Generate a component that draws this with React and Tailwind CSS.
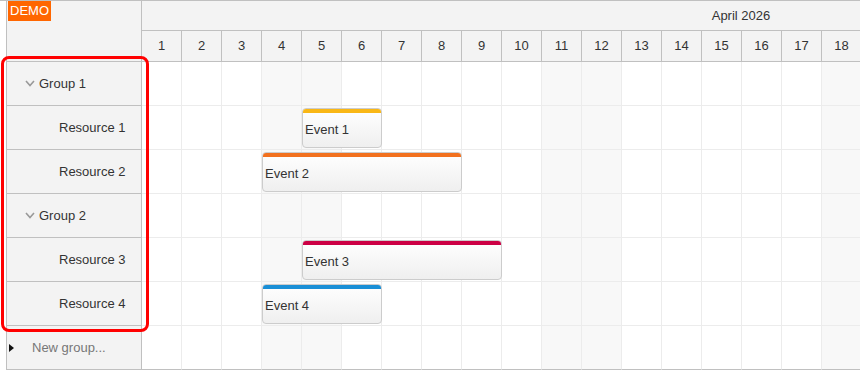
import React from 'react';

const days = Array.from({ length: 30 }, (_, i) => i + 1);
const weekend = [4, 5, 11, 12, 18, 19, 25, 26];

const rows = [
  { type: 'group', name: 'Group 1' },
  { type: 'resource', name: 'Resource 1', event: { text: 'Event 1', start: 5, len: 2, bar: 'bg-[#f9b716]' } },
  { type: 'resource', name: 'Resource 2', event: { text: 'Event 2', start: 4, len: 5, bar: 'bg-[#f2711f]' } },
  { type: 'group', name: 'Group 2' },
  { type: 'resource', name: 'Resource 3', event: { text: 'Event 3', start: 5, len: 5, bar: 'bg-[#cc0044]' } },
  { type: 'resource', name: 'Resource 4', event: { text: 'Event 4', start: 4, len: 3, bar: 'bg-[#1a8fd6]' } },
  { type: 'new', name: 'New group...' },
];

const Chevron = () => (
  <svg width="10" height="7" viewBox="0 0 10 7" className="mr-[4px]">
    <polyline points="1,1 5,5.5 9,1" fill="none" stroke="#999" strokeWidth="1.6" />
  </svg>
);

const RowHeader = ({ row }) => {
  if (row.type === 'group') {
    return (
      <div className="h-[44px] border-b border-[#c0c0c0] flex items-center pl-[18px] text-[#333]">
        <Chevron />
        <span>{row.name}</span>
      </div>
    );
  }
  if (row.type === 'new') {
    return (
      <div className="h-[44px] border-b border-[#c0c0c0] flex items-center pl-[2px] text-[#777]">
        <svg width="6" height="8" viewBox="0 0 6 8" className="mr-[17px]">
          <polygon points="0,0 5,4 0,8" fill="#111" />
        </svg>
        <span>{row.name}</span>
      </div>
    );
  }
  return (
    <div className="h-[44px] border-b border-[#c0c0c0] flex items-center pl-[52px] text-[#333]">
      {row.name}
    </div>
  );
};

const Event = ({ ev }) => (
  <div
    className="absolute top-[2px] h-[40px] rounded-[4px] border border-[#cccccc] bg-gradient-to-b from-white to-[#efefef] overflow-hidden flex flex-col"
    style={{ left: (ev.start - 1) * 40, width: ev.len * 40 }}
  >
    <div className={`h-[4px] shrink-0 ${ev.bar}`} />
    <div className="flex-1 flex items-center pl-[2px] text-[#333]">{ev.text}</div>
  </div>
);

export default function App() {
  return (
    <div className="w-[860px] h-[372px] bg-white relative overflow-hidden font-['Liberation_Sans',Arial,sans-serif] text-[13px]">
      <div className="flex border-t border-[#c0c0c0]">
        <div className="w-[6px] shrink-0" />

        {/* left panel */}
        <div className="w-[136px] shrink-0 border-l border-r border-[#c0c0c0] bg-[#f3f3f3]">
          <div className="h-[61px] border-b border-[#c0c0c0] relative">
            <div className="absolute left-[1px] top-0 bg-[#ff6600] text-white px-[2px] h-[20px] leading-[20px]">DEMO</div>
          </div>
          {rows.map((row, i) => (
            <RowHeader key={i} row={row} />
          ))}
        </div>

        {/* timeline */}
        <div className="flex-1 overflow-hidden">
          <div className="w-[1200px]">
            <div className="bg-[#f3f3f3] border-b border-[#c0c0c0]">
              <div className="h-[30px] border-b border-[#c0c0c0] flex items-center justify-center text-[#333] pr-[2px]">April 2026</div>
              <div className="h-[30px] flex">
                {days.map(d => (
                  <div key={d} className="w-[40px] shrink-0 border-r border-[#c0c0c0] flex items-center justify-center text-[#333]">{d}</div>
                ))}
              </div>
            </div>
            {rows.map((row, i) => (
              <div key={i} className="h-[44px] relative flex">
                {days.map(d => (
                  <div
                    key={d}
                    className={`w-[40px] shrink-0 border-r border-[#ececec] ${i === rows.length - 1 ? 'border-b border-b-[#c0c0c0]' : 'border-b border-b-[#ececec]'} ${weekend.includes(d) ? 'bg-[#f8f8f8]' : 'bg-white'}`}
                  />
                ))}
                {row.event && <Event ev={row.event} />}
              </div>
            ))}
          </div>
        </div>
      </div>

      {/* highlight */}
      <div className="absolute left-[1px] top-[56px] w-[148px] h-[276px] border-[3px] border-[#ff0000] rounded-[8px] pointer-events-none" />
    </div>
  );
}
